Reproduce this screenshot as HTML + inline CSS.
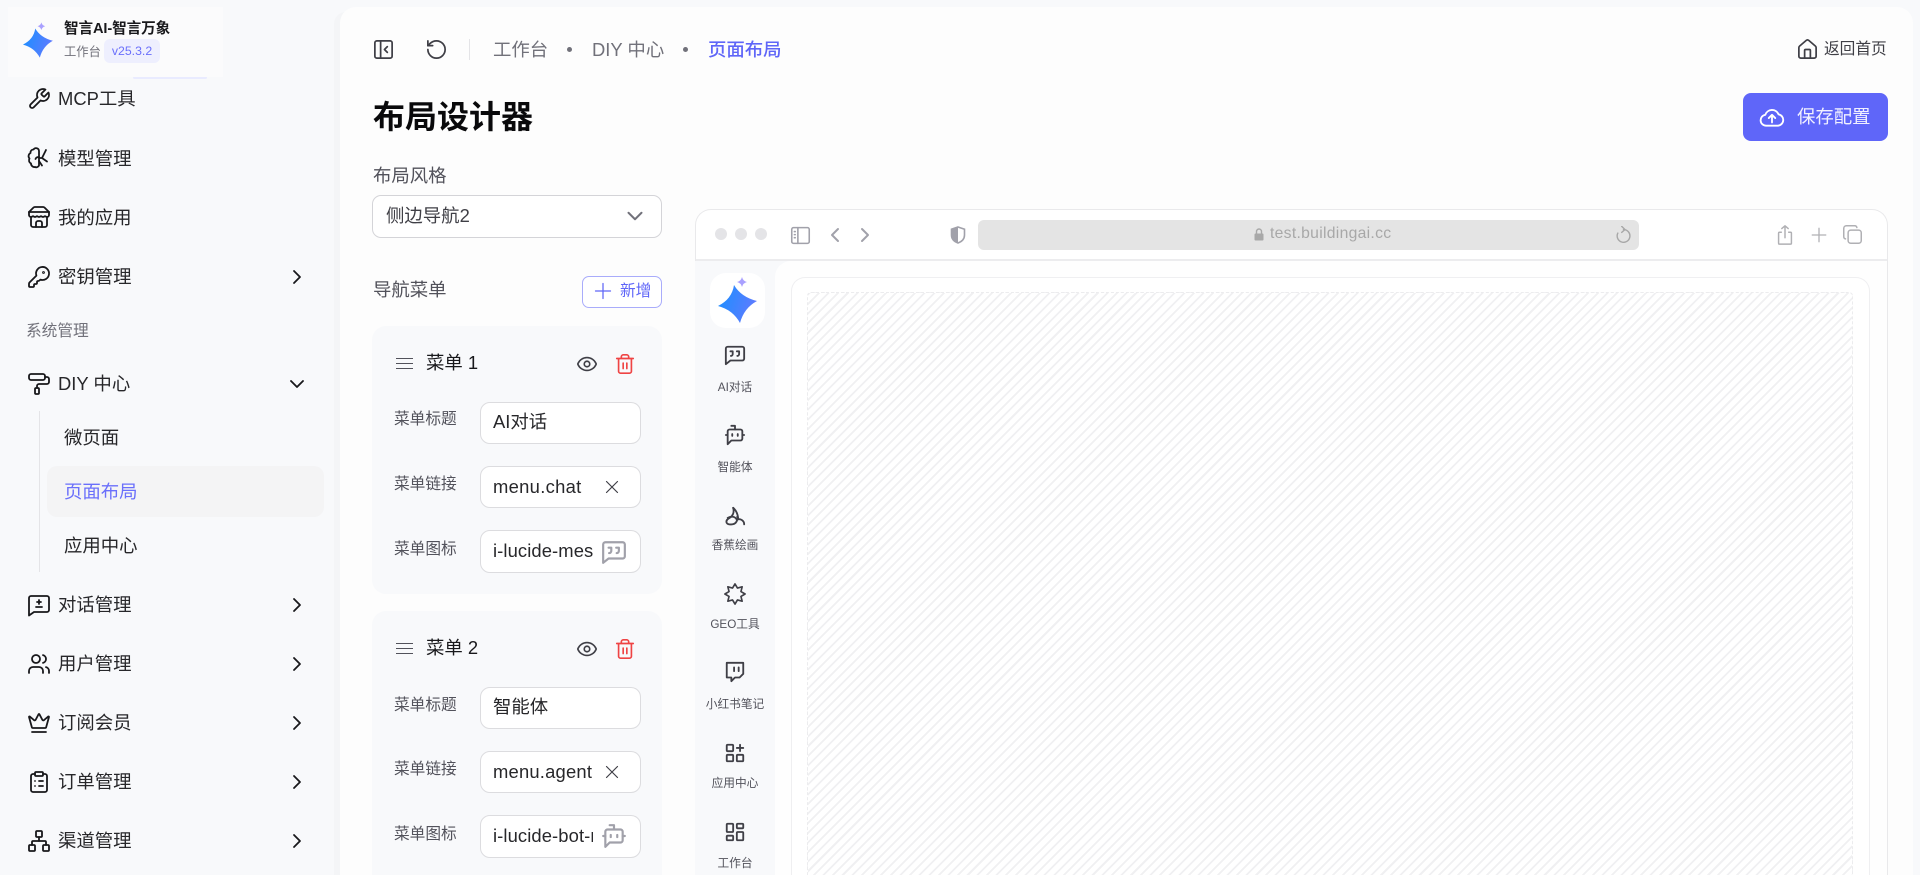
<!DOCTYPE html>
<html lang="zh-CN">
<head>
<meta charset="utf-8">
<title>布局设计器</title>
<style>
html,body{margin:0;padding:0;width:1920px;height:875px;overflow:hidden;background:#f8f9fb}
body{position:relative;font-family:"Liberation Sans","Noto Sans CJK SC",sans-serif;color:#18181b}
.a{position:absolute;box-sizing:border-box}
.t{position:absolute;white-space:nowrap;height:30px;line-height:30px}
.m{font-size:18.4px;color:#27272a}
.r{font-size:11.7px;color:#52525b;left:695px;width:80px;text-align:center}
.l{font-size:15.7px;color:#52525b;left:394px}
.v{font-size:18.4px;color:#27272a;left:493px}
svg.i{position:absolute;fill:none;stroke:currentColor;stroke-width:2;stroke-linecap:round;stroke-linejoin:round;overflow:visible}
.s24{width:24px;height:24px;color:#18181b;stroke-width:1.8!important}
.s22{width:22px;height:22px;color:#3f3f46}
.inp{position:absolute;box-sizing:border-box;left:480px;width:161px;background:#fff;border:1px solid #dcdcdf;border-radius:10px}
.card{position:absolute;left:372px;width:290px;background:#f8f9fb;border-radius:14px}
</style>
</head>
<body>
<svg width="0" height="0" style="position:absolute">
<defs>
<linearGradient id="sg" x1="0" y1="0" x2="1" y2="0.3"><stop offset="0" stop-color="#1890ff"/><stop offset="1" stop-color="#5c7cff"/></linearGradient>
<symbol id="wrench" viewBox="0 0 24 24"><path d="M14.7 6.3a1 1 0 0 0 0 1.4l1.6 1.6a1 1 0 0 0 1.4 0l3.77-3.77a6 6 0 0 1-7.94 7.94l-6.91 6.91a2.12 2.12 0 0 1-3-3l6.91-6.91a6 6 0 0 1 7.94-7.94l-3.76 3.76z"/></symbol>
<symbol id="brain" viewBox="0 0 24 24"><path d="M12 5a3 3 0 0 0-5.500-1.500A3 3 0 0 0 3.500 7 3.500 3.500 0 0 0 2.500 12.500a3.500 3.500 0 0 0 1.500 5A3.500 3.500 0 0 0 8 21a3 3 0 0 0 4-1.500z"/><path d="M12 11c-2 0-3 .5-3.500 2"/><path d="M12 12h3l4-8M15 12l5 3.500M15 19.500l-3-4.500"/></symbol>
<symbol id="store" viewBox="0 0 24 24"><path d="M2 7l4.41-4.41A2 2 0 0 1 7.83 2h8.34a2 2 0 0 1 1.42.59L22 7"/><path d="M4 12v8a2 2 0 0 0 2 2h12a2 2 0 0 0 2-2v-8"/><path d="M15 22v-4a2 2 0 0 0-2-2h-2a2 2 0 0 0-2 2v4"/><path d="M2 7h20"/><path d="M22 7v3a2 2 0 0 1-2 2a2.700 2.700 0 0 1-1.590-.630.700.700 0 0 0-.820 0A2.700 2.700 0 0 1 16 12a2.700 2.700 0 0 1-1.590-.630.700.700 0 0 0-.820 0A2.700 2.700 0 0 1 12 12a2.700 2.700 0 0 1-1.590-.630.700.700 0 0 0-.820 0A2.700 2.700 0 0 1 8 12a2.700 2.700 0 0 1-1.590-.630.700.700 0 0 0-.820 0A2.700 2.700 0 0 1 4 12a2 2 0 0 1-2-2V7"/></symbol>
<symbol id="key" viewBox="0 0 24 24"><path d="M2.586 17.414A2 2 0 0 0 2 18.828V21a1 1 0 0 0 1 1h3a1 1 0 0 0 1-1v-1a1 1 0 0 1 1-1h1a1 1 0 0 0 1-1v-1a1 1 0 0 1 1-1h.172a2 2 0 0 0 1.414-.586l.814-.814a6.500 6.500 0 1 0-4-4z"/><circle cx="16.500" cy="7.500" r=".5"/></symbol>
<symbol id="roller" viewBox="0 0 24 24"><rect x="2" y="2" width="16" height="6" rx="2"/><path d="M10 16v-2a2 2 0 0 1 2-2h8a2 2 0 0 0 2-2V7a2 2 0 0 0-2-2h-2"/><rect x="8" y="16" width="4" height="6" rx="1"/></symbol>
<symbol id="msgplus" viewBox="0 0 24 24"><path d="M22 17a2 2 0 0 1-2 2H7l-5 3.500V5a2 2 0 0 1 2-2h16a2 2 0 0 1 2 2z"/><path d="M12 7v4M10 9h4M9 14h6"/></symbol>
<symbol id="users" viewBox="0 0 24 24"><path d="M16 21v-2a4 4 0 0 0-4-4H6a4 4 0 0 0-4 4v2"/><circle cx="9" cy="7" r="4"/><path d="M22 21v-2a4 4 0 0 0-3-3.870"/><path d="M16 3.130a4 4 0 0 1 0 7.750"/></symbol>
<symbol id="crown" viewBox="0 0 24 24"><path d="M11.562 3.266a.5.5 0 0 1 .876 0L15.390 8.870a1 1 0 0 0 1.516.294L21.183 5.500a.5.5 0 0 1 .798.519l-2.834 10.246a1 1 0 0 1-.956.734H5.810a1 1 0 0 1-.957-.734L2.020 6.020a.5.5 0 0 1 .798-.519l4.276 3.664a1 1 0 0 0 1.516-.294z"/><path d="M5 21h14"/></symbol>
<symbol id="clip" viewBox="0 0 24 24"><rect x="8" y="2" width="8" height="4" rx="1"/><path d="M16 4h2a2 2 0 0 1 2 2v14a2 2 0 0 1-2 2H6a2 2 0 0 1-2-2V6a2 2 0 0 1 2-2h2"/><path d="M12 11h4M12 16h4M8 11h.01M8 16h.01"/></symbol>
<symbol id="network" viewBox="0 0 24 24"><rect x="16" y="16" width="6" height="6" rx="1"/><rect x="2" y="16" width="6" height="6" rx="1"/><rect x="9" y="2" width="6" height="6" rx="1"/><path d="M5 16v-3a1 1 0 0 1 1-1h12a1 1 0 0 1 1 1v3"/><path d="M12 12V8"/></symbol>
<symbol id="cr" viewBox="0 0 24 24"><path d="M9 18l6-6-6-6"/></symbol>
<symbol id="cl" viewBox="0 0 24 24"><path d="M15 18l-6-6 6-6"/></symbol>
<symbol id="cd" viewBox="0 0 24 24"><path d="M6 9l6 6 6-6"/></symbol>
<symbol id="panel" viewBox="0 0 24 24"><rect x="3" y="3" width="18" height="18" rx="2"/><path d="M9 3v18"/><path d="M16 15l-3-3 3-3"/></symbol>
<symbol id="ccw" viewBox="0 0 24 24"><path d="M3 12a9 9 0 1 0 9-9 9.750 9.750 0 0 0-6.740 2.740L3 8"/><path d="M3 3v5h5"/></symbol>
<symbol id="house" viewBox="0 0 24 24"><path d="M15 21v-8a1 1 0 0 0-1-1h-4a1 1 0 0 0-1 1v8"/><path d="M3 10a2 2 0 0 1 .709-1.528l7-5.999a2 2 0 0 1 2.582 0l7 5.999A2 2 0 0 1 21 10v9a2 2 0 0 1-2 2H5a2 2 0 0 1-2-2z"/></symbol>
<symbol id="cloud" viewBox="0 0 24 24"><path d="M6.500 20a5 5 0 0 1-.7-9.950A6.500 6.500 0 0 1 18 9.500a5.300 5.300 0 0 1-.5 10.500z"/><path d="M12 17v-6.500M9 13l3-3 3 3"/></symbol>
<symbol id="eye" viewBox="0 0 24 24"><path d="M2.062 12.348a1 1 0 0 1 0-.696 10.750 10.750 0 0 1 19.876 0 1 1 0 0 1 0 .696 10.750 10.750 0 0 1-19.876 0"/><circle cx="12" cy="12" r="3"/></symbol>
<symbol id="trash" viewBox="0 0 24 24"><path d="M3 6h18M19 6v14c0 1-1 2-2 2H7c-1 0-2-1-2-2V6M8 6V4c0-1 1-2 2-2h4c1 0 2 1 2 2v2M10 11v6M14 11v6"/></symbol>
<symbol id="x" viewBox="0 0 24 24"><path d="M18 6L6 18M6 6l12 12"/></symbol>
<symbol id="quote" viewBox="0 0 24 24"><path d="M22 16a2 2 0 0 1-2 2H7l-5 4V5a2 2 0 0 1 2-2h16a2 2 0 0 1 2 2z"/><path d="M7.500 13a2 2 0 0 0 2-2V8H7M14.500 13a2 2 0 0 0 2-2V8H14"/></symbol>
<symbol id="bot" viewBox="0 0 24 24"><path d="M12 6V2H8"/><path d="M8 18l-4 4V8a2 2 0 0 1 2-2h12a2 2 0 0 1 2 2v8a2 2 0 0 1-2 2Z"/><path d="M2 12h2M9 11v2M15 11v2M20 12h2"/></symbol>
<symbol id="banana" viewBox="0 0 24 24"><path d="M4 13c3.500-2 8-2 10 2a5.500 5.500 0 0 1 8 5"/><path d="M10 2c3 2.500 5 7 5.500 11.500"/><path d="M10 2c1.500 5-.5 9-4 11-3 1.700-4 3.500-3 5.500 1.500 2.500 8 2 10-.5 1.500-2 2-4 1.500-6.500"/></symbol>
<symbol id="maple" viewBox="0 0 24 24"><path d="M12 1L14.700 5.500 19.800 4.200 18.500 9.300 23 12 18.500 14.700 19.800 19.800 14.700 18.500 12 23 9.300 18.500 4.200 19.800 5.500 14.700 1 12 5.500 9.300 4.200 4.200 9.300 5.500Z"/></symbol>
<symbol id="twitch" viewBox="0 0 24 24"><path d="M21 2H3v16h5v4l4-4h5l4-4V2zm-10 9V7m5 4V7"/></symbol>
<symbol id="apps" viewBox="0 0 24 24"><rect x="3" y="3" width="7" height="7" rx="1"/><rect x="3" y="14" width="7" height="7" rx="1"/><rect x="14" y="14" width="7" height="7" rx="1"/><path d="M17.500 3v7M14 6.500h7"/></symbol>
<symbol id="grid" viewBox="0 0 24 24"><rect x="3" y="3" width="7" height="9" rx="1"/><rect x="14" y="3" width="7" height="5" rx="1"/><rect x="14" y="12" width="7" height="9" rx="1"/><rect x="3" y="16" width="7" height="5" rx="1"/></symbol>
<symbol id="side" viewBox="0 0 24 24"><rect x="2" y="3" width="20" height="18" rx="2"/><path d="M9 3v18M5 7.500h1M5 11h1M5 14.500h1"/></symbol>
<symbol id="share" viewBox="0 0 24 24"><path d="M8 9H6a1 1 0 0 0-1 1v11a1 1 0 0 0 1 1h12a1 1 0 0 0 1-1V10a1 1 0 0 0-1-1h-2"/><path d="M12 15V2M8.500 5L12 2l3.500 3"/></symbol>
<symbol id="plus" viewBox="0 0 24 24"><path d="M12 3v18M3 12h18"/></symbol>
<symbol id="copy" viewBox="0 0 24 24"><rect x="7" y="7" width="15" height="15" rx="3"/><path d="M4 17a2.500 2.500 0 0 1-2-2.500V5a3 3 0 0 1 3-3h9.500A2.500 2.500 0 0 1 17 4"/></symbol>
<symbol id="refresh" viewBox="0 0 24 24"><path d="M12 5a9 9 0 1 1-8 5"/><path d="M9.500 0.500L14 5l-4.500 4"/></symbol>
<symbol id="star" viewBox="0 0 60 60"><path fill="url(#sg)" stroke="none" d="M29 15Q36 27 52 31Q39 38 35 53Q28 40 13 36Q27 29 29 15Z"/><path fill="#a9a0ff" stroke="none" d="M37 7Q38 11 42 12Q38 13 37 17Q36 13 32 12Q36 11 37 7Z"/></symbol>
</defs>
</svg>

<!-- Sidebar logo -->
<div class="a" style="left:133px;top:76px;width:74px;height:3px;background:#e9ebff;border-radius:2px"></div>
<div class="a" style="left:8px;top:7px;width:215px;height:70px;background:#fbfbfc"></div>
<svg class="i" style="left:13px;top:17px;width:46px;height:46px"><use href="#star"/></svg>
<div class="t" style="left:64px;top:14px;font-size:14.600px;font-weight:700;color:#18181b;letter-spacing:-.1px">智言AI-智言万象</div>
<div class="t" style="left:64px;top:37px;font-size:12.300px;color:#71717a">工作台</div>
<div class="a" style="left:104px;top:39px;width:56px;height:24px;background:#eeeffe;border-radius:6px;font-size:12.300px;line-height:24px;text-align:center;color:#6a6ffb">v25.3.2</div>

<!-- Sidebar menu -->
<svg class="i s24" style="left:27px;top:87px"><use href="#wrench"/></svg><div class="t m" style="left:58px;top:84px">MCP工具</div>
<svg class="i s24" style="left:27px;top:146px"><use href="#brain"/></svg><div class="t m" style="left:58px;top:144px">模型管理</div>
<svg class="i s24" style="left:27px;top:205px"><use href="#store"/></svg><div class="t m" style="left:58px;top:203px">我的应用</div>
<svg class="i s24" style="left:27px;top:265px"><use href="#key"/></svg><div class="t m" style="left:58px;top:262px">密钥管理</div>
<svg class="i s24" style="left:285px;top:265px"><use href="#cr"/></svg>
<div class="t" style="left:26px;top:317px;font-size:15.700px;color:#71717a">系统管理</div>
<svg class="i s24" style="left:27px;top:372px"><use href="#roller"/></svg><div class="t m" style="left:58px;top:369px">DIY 中心</div>
<svg class="i s24" style="left:285px;top:372px"><use href="#cd"/></svg>
<div class="a" style="left:39px;top:411px;width:1px;height:161px;background:#e4e4e7"></div>
<div class="t m" style="left:64px;top:423px">微页面</div>
<div class="a" style="left:47px;top:466px;width:277px;height:51px;background:#f4f4f5;border-radius:10px"></div>
<div class="t m" style="left:64px;top:477px;color:#6a6ffb">页面布局</div>
<div class="t m" style="left:64px;top:531px">应用中心</div>
<svg class="i s24" style="left:27px;top:593px"><use href="#msgplus"/></svg><div class="t m" style="left:58px;top:590px">对话管理</div>
<svg class="i s24" style="left:285px;top:593px"><use href="#cr"/></svg>
<svg class="i s24" style="left:27px;top:652px"><use href="#users"/></svg><div class="t m" style="left:58px;top:649px">用户管理</div>
<svg class="i s24" style="left:285px;top:652px"><use href="#cr"/></svg>
<svg class="i s24" style="left:27px;top:711px"><use href="#crown"/></svg><div class="t m" style="left:58px;top:708px">订阅会员</div>
<svg class="i s24" style="left:285px;top:711px"><use href="#cr"/></svg>
<svg class="i s24" style="left:27px;top:770px"><use href="#clip"/></svg><div class="t m" style="left:58px;top:767px">订单管理</div>
<svg class="i s24" style="left:285px;top:770px"><use href="#cr"/></svg>
<svg class="i s24" style="left:27px;top:829px"><use href="#network"/></svg><div class="t m" style="left:58px;top:826px">渠道管理</div>
<svg class="i s24" style="left:285px;top:829px"><use href="#cr"/></svg>

<!-- Main panel -->
<div class="a" style="left:334px;top:12px;width:12px;height:863px;background:#f4f5f7;border-radius:12px 0 0 0"></div>
<div class="a" style="left:340px;top:7px;width:1573px;height:868px;background:#fdfdfd;border-radius:16px 16px 0 0"></div>

<!-- Header -->
<svg class="i" style="left:372px;top:38px;width:23px;height:23px;color:#3f3f46;stroke-width:1.800"><use href="#panel"/></svg>
<svg class="i" style="left:425px;top:38px;width:23px;height:23px;color:#3f3f46;stroke-width:1.800"><use href="#ccw"/></svg>
<div class="a" style="left:469px;top:39px;width:1px;height:21px;background:#e4e4e7"></div>
<div class="t" style="left:493px;top:35px;font-size:18.400px;color:#71717a">工作台</div>
<div class="a" style="left:567px;top:47px;width:5px;height:5px;border-radius:50%;background:#71717a"></div>
<div class="t" style="left:592px;top:35px;font-size:18.400px;color:#71717a">DIY 中心</div>
<div class="a" style="left:683px;top:47px;width:5px;height:5px;border-radius:50%;background:#71717a"></div>
<div class="t" style="left:708px;top:35px;font-size:18.400px;color:#5f66f8;font-weight:500">页面布局</div>
<svg class="i" style="left:1796px;top:38px;width:23px;height:23px;color:#3f3f46;stroke-width:1.800"><use href="#house"/></svg>
<div class="t" style="left:1824px;top:35px;font-size:15.700px;color:#3f3f46">返回首页</div>

<div class="t" style="left:373px;top:102px;font-size:32px;font-weight:700;color:#09090b">布局设计器</div>
<div class="a" style="left:1743px;top:93px;width:145px;height:48px;background:#5f66f9;border-radius:8px"></div>
<svg class="i" style="left:1759px;top:104px;width:26px;height:26px;color:#fff;stroke-width:1.700"><use href="#cloud"/></svg>
<div class="t" style="left:1797px;top:102px;font-size:18.400px;color:#f0f0ff">保存配置</div>

<!-- Layout style -->
<div class="t" style="left:373px;top:161px;font-size:18.400px;color:#52525b">布局风格</div>
<div class="a" style="left:372px;top:195px;width:290px;height:43px;background:#fff;border:1px solid #d4d4d8;border-radius:9px"></div>
<div class="t" style="left:386px;top:201px;font-size:18.400px;color:#3f3f46">侧边导航2</div>
<svg class="i" style="left:622px;top:203px;width:26px;height:26px;color:#71717a;stroke-width:1.800"><use href="#cd"/></svg>

<div class="t" style="left:373px;top:275px;font-size:18.400px;color:#52525b">导航菜单</div>
<div class="a" style="left:582px;top:276px;width:80px;height:32px;background:#fff;border:1px solid #a9acfb;border-radius:7px"></div>
<svg class="i" style="left:593px;top:281px;width:20px;height:20px;color:#5f66f8;stroke-width:1.500"><use href="#plus"/></svg>
<div class="t" style="left:620px;top:277px;font-size:15.700px;color:#5f66f8">新增</div>

<!-- Card 1 -->
<div class="card" style="top:326px;height:268px"></div>
<div class="a" style="left:396px;top:358px;width:17px;height:1px;background:#52525b"></div>
<div class="a" style="left:396px;top:363px;width:17px;height:1px;background:#52525b"></div>
<div class="a" style="left:396px;top:368px;width:17px;height:1px;background:#52525b"></div>
<div class="t" style="left:426px;top:348px;font-size:18.400px;color:#18181b">菜单 1</div>
<svg class="i" style="left:576px;top:353px;width:22px;height:22px;color:#3f3f46;stroke-width:1.800"><use href="#eye"/></svg>
<svg class="i" style="left:614px;top:353px;width:22px;height:22px;color:#ef4444;stroke-width:1.800"><use href="#trash"/></svg>
<div class="t l" style="top:405px">菜单标题</div>
<div class="inp" style="top:402px;height:42px"></div>
<div class="t v" style="top:407px">AI对话</div>
<div class="t l" style="top:470px">菜单链接</div>
<div class="inp" style="top:466px;height:42px"></div>
<div class="t v" style="top:472px;letter-spacing:.3px">menu.chat</div>
<svg class="i" style="left:601px;top:476px;width:22px;height:22px;color:#3f3f46;stroke-width:1.300"><use href="#x"/></svg>
<div class="t l" style="top:535px">菜单图标</div>
<div class="inp" style="top:530px;height:43px"></div>
<div class="t v" style="top:536px;width:100px;overflow:hidden;letter-spacing:.1px">i-lucide-message</div>
<svg class="i" style="left:601px;top:539px;width:26px;height:26px;color:#a1a1aa"><use href="#quote"/></svg>

<!-- Card 2 -->
<div class="card" style="top:611px;height:264px;border-radius:14px 14px 0 0"></div>
<div class="a" style="left:396px;top:643px;width:17px;height:1px;background:#52525b"></div>
<div class="a" style="left:396px;top:648px;width:17px;height:1px;background:#52525b"></div>
<div class="a" style="left:396px;top:653px;width:17px;height:1px;background:#52525b"></div>
<div class="t" style="left:426px;top:633px;font-size:18.400px;color:#18181b">菜单 2</div>
<svg class="i" style="left:576px;top:638px;width:22px;height:22px;color:#3f3f46;stroke-width:1.800"><use href="#eye"/></svg>
<svg class="i" style="left:614px;top:638px;width:22px;height:22px;color:#ef4444;stroke-width:1.800"><use href="#trash"/></svg>
<div class="t l" style="top:691px">菜单标题</div>
<div class="inp" style="top:687px;height:42px"></div>
<div class="t v" style="top:692px">智能体</div>
<div class="t l" style="top:755px">菜单链接</div>
<div class="inp" style="top:751px;height:42px"></div>
<div class="t v" style="top:757px;letter-spacing:.2px">menu.agent</div>
<svg class="i" style="left:601px;top:761px;width:22px;height:22px;color:#3f3f46;stroke-width:1.300"><use href="#x"/></svg>
<div class="t l" style="top:820px">菜单图标</div>
<div class="inp" style="top:815px;height:43px"></div>
<div class="t v" style="top:821px;width:100px;overflow:hidden;letter-spacing:.1px">i-lucide-bot-message</div>
<svg class="i" style="left:601px;top:823px;width:26px;height:26px;color:#a1a1aa"><use href="#bot"/></svg>

<!-- Browser preview -->
<div class="a" style="left:695px;top:209px;width:1193px;height:666px;background:#fff;border:1px solid #e9e9eb;border-bottom:0;border-radius:16px 16px 0 0"></div>
<div class="a" style="left:696px;top:259px;width:1191px;height:2px;background:#ececee"></div>
<div class="a" style="left:715px;top:228px;width:12px;height:12px;border-radius:50%;background:#e4e4e7"></div>
<div class="a" style="left:735px;top:228px;width:12px;height:12px;border-radius:50%;background:#e4e4e7"></div>
<div class="a" style="left:755px;top:228px;width:12px;height:12px;border-radius:50%;background:#e4e4e7"></div>
<svg class="i" style="left:790px;top:225px;width:21px;height:21px;color:#a1a1aa;stroke-width:1.800"><use href="#side"/></svg>
<svg class="i" style="left:823px;top:222.500px;width:24px;height:24px;color:#a1a1aa"><use href="#cl"/></svg>
<svg class="i" style="left:853px;top:222.500px;width:24px;height:24px;color:#a1a1aa"><use href="#cr"/></svg>
<svg class="a" style="left:950px;top:226px;width:16px;height:18px" viewBox="0 0 16 18"><path d="M8 1l6.500 2.200V9c0 4-3 6.700-6.500 8-3.500-1.300-6.500-4-6.500-8V3.200z" fill="none" stroke="#a1a1aa" stroke-width="1.600"/><path d="M8 1v16C4.500 15.700 1.500 13 1.500 9V3.200z" fill="#a1a1aa"/></svg>
<div class="a" style="left:978px;top:220px;width:661px;height:30px;background:#e4e4e4;border-radius:6px"></div>
<svg class="a" style="left:1254px;top:228px;width:10px;height:13px" viewBox="0 0 10 13"><path d="M2.500 6V3.500a2.500 2.500 0 0 1 5 0V6" fill="none" stroke="#a8a8a8" stroke-width="1.400"/><rect x=".5" y="5.500" width="9" height="7" rx="1" fill="#a8a8a8"/></svg>
<div class="t" style="left:1270px;top:219px;font-size:15.700px;color:#a8a8a8;letter-spacing:.3px">test.buildingai.cc</div>
<svg class="i" style="left:1615px;top:226px;width:17px;height:17px;color:#a8a8a8;stroke-width:2"><use href="#refresh"/></svg>
<svg class="i" style="left:1774px;top:224px;width:22px;height:22px;color:#b0b0b4;stroke-width:1.600"><use href="#share"/></svg>
<svg class="i" style="left:1810px;top:226px;width:18px;height:18px;color:#b0b0b4;stroke-width:1.700"><use href="#plus"/></svg>
<svg class="i" style="left:1842px;top:224px;width:21px;height:21px;color:#b0b0b4;stroke-width:1.700"><use href="#copy"/></svg>

<!-- Preview rail -->
<div class="a" style="left:695px;top:261px;width:100px;height:614px;background:#f8f9fb"></div>
<div class="a" style="left:775px;top:261px;width:1112px;height:614px;background:#fefefe;border-radius:16px 0 0 0"></div>
<div class="a" style="left:710px;top:273px;width:55px;height:55px;background:#fff;border-radius:16px"></div>
<svg class="i" style="left:705px;top:270px;width:60px;height:60px"><use href="#star"/></svg>
<svg class="i s22" style="left:724px;top:344px"><use href="#quote"/></svg><div class="t r" style="top:373px">AI对话</div>
<svg class="i s22" style="left:724px;top:424px"><use href="#bot"/></svg><div class="t r" style="top:453px">智能体</div>
<svg class="i s22" style="left:724px;top:506px"><use href="#banana"/></svg><div class="t r" style="top:531px">香蕉绘画</div>
<svg class="i s22" style="left:724px;top:583px;stroke-width:1.800"><use href="#maple"/></svg><div class="t r" style="top:610px">GEO工具</div>
<svg class="i s22" style="left:724px;top:661px"><use href="#twitch"/></svg><div class="t r" style="top:690px">小红书笔记</div>
<svg class="i s22" style="left:724px;top:742px"><use href="#apps"/></svg><div class="t r" style="top:769px">应用中心</div>
<svg class="i s22" style="left:724px;top:821px"><use href="#grid"/></svg><div class="t r" style="top:849px">工作台</div>

<!-- Preview content -->
<div class="a" style="left:791px;top:277px;width:1079px;height:598px;background:#fff;border:1px solid #efeff1;border-bottom:0;border-radius:14px 14px 0 0"></div>
<div class="a" style="left:807px;top:292px;width:1046px;height:583px;border:1px dashed #ececee;border-bottom:0;border-radius:4px 4px 0 0;background:repeating-linear-gradient(135deg,#f0f0f2 0 1.800px,#fff 1.800px 6.800px)"></div>
</body>
</html>
